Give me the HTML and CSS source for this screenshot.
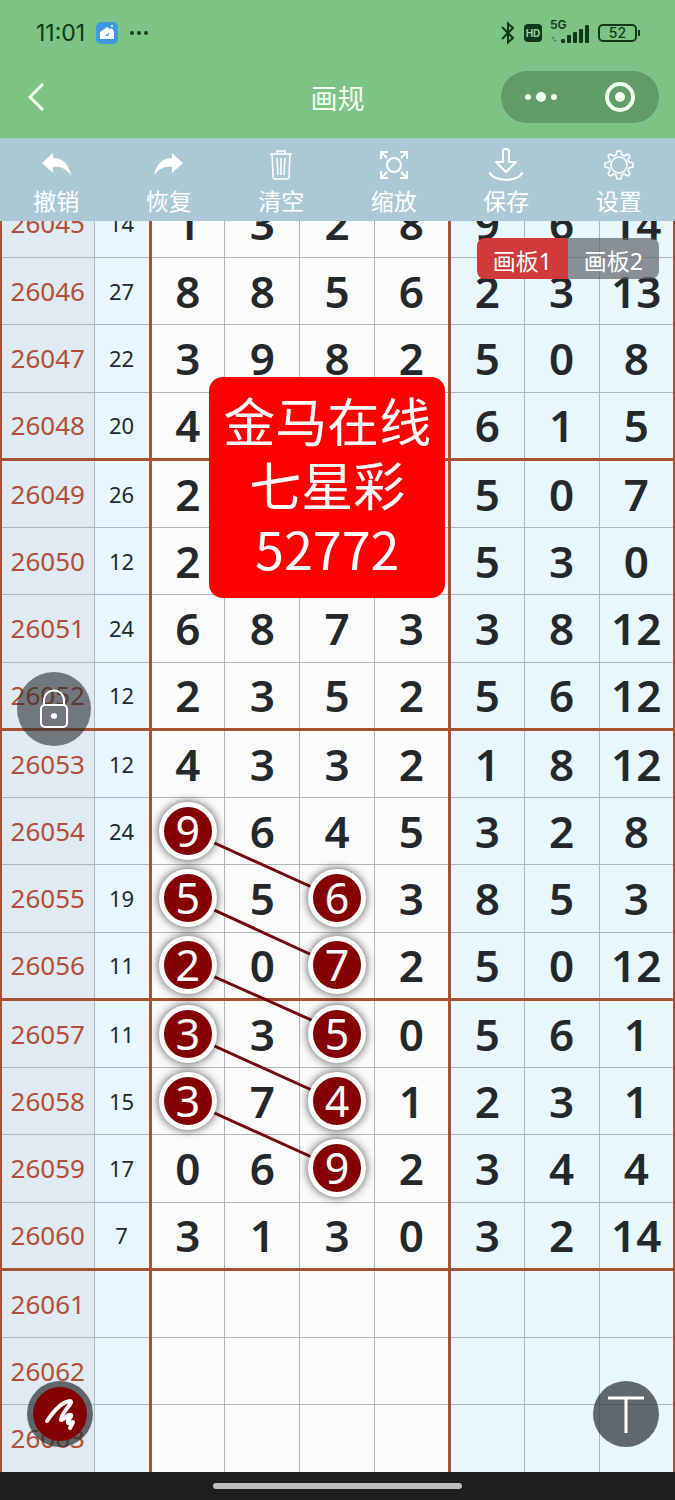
FILE: index.html
```html
<!DOCTYPE html>
<html lang="zh-CN">
<head>
    <meta charset="UTF-8">
    <meta name="viewport" content="width=device-width, initial-scale=1.0">
    <title>画规</title>
    <link rel="stylesheet" href="styles.css">
</head>
<body>
    <div class="screen">
        <header class="header">
            <div class="status">
                <div class="status_left">
                    <span class="time">11:01</span>
                    <svg class="app_icon" viewBox="0 0 24 24" width="24" height="24">
                        <rect x="1" y="1" width="22" height="22" rx="5" fill="#3f98e0"/>
                        <path d="M5 11L12 6L15 8L17 7L19 11V18H5Z" fill="#fff"/>
                        <circle cx="17" cy="5" r="1" fill="#fff"/>
                        <path d="M14 11V14Q12 16 10 14L13 13Z" fill="#3f98e0"/>
                    </svg>
                    <svg viewBox="0 0 20 6" width="20" height="6" fill="#12401c">
                        <circle cx="3" cy="3" r="2"/><circle cx="10" cy="3" r="2"/><circle cx="17" cy="3" r="2"/>
                    </svg>
                </div>
                <div class="status_right">
                    <svg viewBox="0 0 16 24" width="16" height="24" fill="none" stroke="#10381a" stroke-width="2">
                        <path d="M2 6L13 17L8 21.500V2.500L13 7L2 18"/>
                    </svg>
                    <span class="hd">HD</span>
                    <span class="signal">
                        <span class="net">5G</span>
                        <svg viewBox="0 0 40 22" width="40" height="22" fill="#10381a">
                            <path d="M1 17L4 14V17ZM4 18H7L4 20Z" opacity=".5"/>
                            <rect x="11" y="17" width="4" height="4" rx="1"/>
                            <rect x="17" y="13" width="4" height="8" rx="1"/>
                            <rect x="23" y="10" width="4" height="11" rx="1"/>
                            <rect x="29" y="7" width="4" height="14" rx="1"/>
                            <rect x="35" y="3" width="4" height="18" rx="1"/>
                        </svg>
                    </span>
                    <span class="battery">52</span>
                </div>
            </div>
            <div class="nav">
                <button class="back" aria-label="返回">
                    <svg viewBox="0 0 20 32" width="20" height="32" fill="none" stroke="#f2fff0" stroke-width="3">
                        <path d="M17 3L4 16L17 29"/>
                    </svg>
                </button>
                <h1>画规</h1>
                <div class="capsule">
                    <button aria-label="更多">
                        <svg viewBox="0 0 34 12" width="34" height="12" fill="#effff0">
                            <circle cx="4" cy="6" r="3"/><circle cx="17" cy="6" r="5"/><circle cx="30" cy="6" r="3"/>
                        </svg>
                    </button>
                    <button aria-label="关闭">
                        <svg viewBox="0 0 32 32" width="32" height="32">
                            <circle cx="16" cy="16" r="13" fill="none" stroke="#effff0" stroke-width="4"/>
                            <circle cx="16" cy="16" r="5" fill="#effff0"/>
                        </svg>
                    </button>
                </div>
            </div>
        </header>

        <div class="toolbar">
            <button class="tool">
                <svg viewBox="0 0 34 34" width="34" height="34" fill="#fff">
                    <path d="M3 15L14 5V10C24 10 30 17 32 27C26 20 21 18 14 19V25Z"/>
                </svg>
                撤销
            </button>
            <button class="tool">
                <svg viewBox="0 0 34 34" width="34" height="34" fill="#fff">
                    <path d="M31 15L20 5V10C10 10 4 17 2 27C8 20 13 18 20 19V25Z"/>
                </svg>
                恢复
            </button>
            <button class="tool">
                <svg viewBox="0 0 34 34" width="34" height="34" fill="none" stroke="#fff" stroke-width="1.500">
                    <path d="M6 6H28M13 6V3H21V6M8 6L9 28Q9 31 11 31H23Q25 31 25 28L26 6M13 10L14 27M17 10V27M21 10L20 27"/>
                </svg>
                清空
            </button>
            <button class="tool">
                <svg viewBox="0 0 34 34" width="34" height="34" fill="none" stroke="#fff" stroke-width="2">
                    <circle cx="17" cy="17" r="7"/>
                    <path d="M4 11V4H11M23 4H30V11M30 23V30H23M11 30H4V23M4 4L10 10M30 4L24 10M30 30L24 24M4 30L10 24"/>
                </svg>
                缩放
            </button>
            <button class="tool">
                <svg viewBox="0 0 34 34" width="34" height="34" fill="none" stroke="#fff" stroke-width="2" stroke-linejoin="round" stroke-linecap="round">
                    <path d="M14 3Q14 1 17 1Q20 1 20 3V14H27L17 24L7 14H14Z"/>
                    <path d="M1 25C5 34 29 34 33 25"/>
                </svg>
                保存
            </button>
            <button class="tool">
                <svg viewBox="0 0 34 34" width="34" height="34" fill="none" stroke="#fff" stroke-width="1.500" stroke-linejoin="round">
                    <circle cx="17" cy="17" r="8"/>
                    <path d="M14 7L15 3H19L20 7L22 8L26 6L28 8L26 12L27 14L31 15V19L27 20L26 22L28 26L26 28L22 26L20 27L19 31H15L14 27L12 26L8 28L6 26L8 22L7 20L3 19V15L7 14L8 12L6 8L8 6L12 8Z"/>
                </svg>
                设置
            </button>
        </div>

        <main class="board">
            <table class="chart">
                <colgroup>
                    <col class="col_issue">
                    <col class="col_sum">
                    <col span="7">
                </colgroup>
                <tbody>
                    <tr><th scope="row">26045</th><td>14</td><td>1</td><td>3</td><td>2</td><td>8</td><td>9</td><td>6</td><td>14</td></tr>
                    <tr><th scope="row">26046</th><td>27</td><td>8</td><td>8</td><td>5</td><td>6</td><td>2</td><td>3</td><td>13</td></tr>
                    <tr><th scope="row">26047</th><td>22</td><td>3</td><td>9</td><td>8</td><td>2</td><td>5</td><td>0</td><td>8</td></tr>
                    <tr><th scope="row">26048</th><td>20</td><td>4</td><td></td><td></td><td></td><td>6</td><td>1</td><td>5</td></tr>
                    <tr><th scope="row">26049</th><td>26</td><td>2</td><td></td><td></td><td></td><td>5</td><td>0</td><td>7</td></tr>
                    <tr><th scope="row">26050</th><td>12</td><td>2</td><td></td><td></td><td></td><td>5</td><td>3</td><td>0</td></tr>
                    <tr><th scope="row">26051</th><td>24</td><td>6</td><td>8</td><td>7</td><td>3</td><td>3</td><td>8</td><td>12</td></tr>
                    <tr><th scope="row">26052</th><td>12</td><td>2</td><td>3</td><td>5</td><td>2</td><td>5</td><td>6</td><td>12</td></tr>
                    <tr><th scope="row">26053</th><td>12</td><td>4</td><td>3</td><td>3</td><td>2</td><td>1</td><td>8</td><td>12</td></tr>
                    <tr>
                        <th scope="row">26054</th><td>24</td>
                        <td><svg class="trace" viewBox="0 0 100 100" preserveAspectRatio="none"><path d="M0 0L100 100"/></svg><span class="ball">9</span></td>
                        <td>6</td><td>4</td><td>5</td><td>3</td><td>2</td><td>8</td>
                    </tr>
                    <tr>
                        <th scope="row">26055</th><td>19</td>
                        <td><svg class="trace" viewBox="0 0 100 100" preserveAspectRatio="none"><path d="M0 0L100 100"/></svg><span class="ball">5</span></td>
                        <td>5</td><td><span class="ball">6</span></td><td>3</td><td>8</td><td>5</td><td>3</td>
                    </tr>
                    <tr>
                        <th scope="row">26056</th><td>11</td>
                        <td><svg class="trace" viewBox="0 0 100 100" preserveAspectRatio="none"><path d="M0 0L100 100"/></svg><span class="ball">2</span></td>
                        <td>0</td><td><span class="ball">7</span></td><td>2</td><td>5</td><td>0</td><td>12</td>
                    </tr>
                    <tr>
                        <th scope="row">26057</th><td>11</td>
                        <td><svg class="trace" viewBox="0 0 100 100" preserveAspectRatio="none"><path d="M0 0L100 100"/></svg><span class="ball">3</span></td>
                        <td>3</td><td><span class="ball">5</span></td><td>0</td><td>5</td><td>6</td><td>1</td>
                    </tr>
                    <tr>
                        <th scope="row">26058</th><td>15</td>
                        <td><svg class="trace" viewBox="0 0 100 100" preserveAspectRatio="none"><path d="M0 0L100 100"/></svg><span class="ball">3</span></td>
                        <td>7</td><td><span class="ball">4</span></td><td>1</td><td>2</td><td>3</td><td>1</td>
                    </tr>
                    <tr><th scope="row">26059</th><td>17</td><td>0</td><td>6</td><td><span class="ball">9</span></td><td>2</td><td>3</td><td>4</td><td>4</td></tr>
                    <tr><th scope="row">26060</th><td>7</td><td>3</td><td>1</td><td>3</td><td>0</td><td>3</td><td>2</td><td>14</td></tr>
                    <tr><th scope="row">26061</th><td></td><td></td><td></td><td></td><td></td><td></td><td></td><td></td></tr>
                    <tr><th scope="row">26062</th><td></td><td></td><td></td><td></td><td></td><td></td><td></td><td></td></tr>
                    <tr><th scope="row">26063</th><td></td><td></td><td></td><td></td><td></td><td></td><td></td><td></td></tr>
                </tbody>
            </table>

            <div class="tabs">
                <button class="tab active">画板1</button>
                <button class="tab">画板2</button>
            </div>
            <div class="note">金马在线<br>七星彩<br>52772</div>
            <button class="round lock" aria-label="锁定">
                <svg viewBox="0 0 32 42" width="32" height="42" fill="none" stroke="#fff" stroke-width="2">
                    <rect x="3" y="17" width="26" height="22" rx="4"/>
                    <path d="M6 17V13C6 -1 26 -1 26 13V17"/>
                    <circle cx="16" cy="28" r="3" fill="#fff" stroke="none"/>
                </svg>
            </button>
            <button class="round pen" aria-label="画笔">
                <svg viewBox="0 0 54 54" width="54" height="54" fill="none" stroke="#fff" stroke-width="4" stroke-linecap="round" stroke-linejoin="round">
                    <circle cx="27" cy="27" r="27" fill="#850002" stroke="none"/>
                    <path d="M14 34C20 25 29 15 37 14C42 15 28 25 28 33C31 33 35 26 38 28C40 30 33 33 35 36C37 37 38 35 40 35L37 41"/>
                </svg>
            </button>
            <button class="round text" aria-label="文字">
                <svg viewBox="0 0 40 40" width="40" height="40" fill="none" stroke="#fff" stroke-width="3">
                    <path d="M2 4H38M20 4V39"/>
                </svg>
            </button>
        </main>

        <footer class="home"><span class="home_bar"></span></footer>
    </div>
</body>
</html>
```
FILE: styles.css
```css
*{
    margin: 0;
    padding: 0;
    box-sizing: border-box;
}
body {
    font-family: "Noto Sans", "Noto Sans CJK SC", sans-serif;
}
button {
    border: none;
    background: none;
    font: inherit;
    color: #fff;
    cursor: pointer;
}
svg {
    display: block;
}
.screen {
    display: flex;
    flex-direction: column;
    height: 100vh;
    overflow: hidden;
}
.header {
    background-color: #7cc386;
    padding-bottom: 10px;
}
.status {
    display: flex;
    justify-content: space-between;
    align-items: center;
    height: 66px;
    padding: 0 38px 0 36px;
    color: #10381a;
}
.status_left {
    display: flex;
    align-items: center;
    gap: 10px;
}
.time {
    font-family: Inter, sans-serif;
    font-size: 23px;
}
.status_right {
    display: flex;
    align-items: center;
    gap: 8px;
}
.hd {
    background-color: #10381a;
    color: #9bd4a3;
    font: 700 10px/18px Inter, sans-serif;
    width: 18px;
    text-align: center;
    border-radius: 4px;
}
.signal {
    position: relative;
}
.net {
    position: absolute;
    left: 0;
    top: -4px;
    font: 600 12px/14px Inter, sans-serif;
}
.battery {
    position: relative;
    width: 39px;
    border: 2px solid #10381a;
    border-radius: 5px;
    font: 500 14px/14px Inter, sans-serif;
    text-align: center;
}
.battery::after {
    content: "";
    position: absolute;
    right: -5px;
    top: 4px;
    width: 2px;
    height: 6px;
    background-color: #10381a;
}
.nav {
    display: grid;
    grid-template-columns: 1fr auto 1fr;
    align-items: center;
    height: 62px;
    padding: 0 16px;
}
.back {
    justify-self: start;
    padding-left: 10px;
}
h1 {
    font-size: 27px;
    font-weight: 400;
    color: #f2fff0;
}
.capsule {
    justify-self: end;
    display: flex;
    justify-content: space-around;
    align-items: center;
    width: 158px;
    height: 52px;
    border-radius: 26px;
    background-color: #609c69;
}
.toolbar {
    display: grid;
    grid-template-columns: repeat(6, 1fr);
    height: 83px;
    flex: none;
    background-color: #acc8d4;
}
.tool {
    display: flex;
    flex-direction: column;
    align-items: center;
    gap: 3px;
    padding-top: 10px;
    font-size: 23px;
    line-height: 32px;
}
.board {
    position: relative;
    display: flex;
    flex-direction: column;
    justify-content: flex-end;
    flex: 1;
    min-height: 0;
    overflow: hidden;
}
.chart {
    flex: none;
    width: 100%;
    table-layout: fixed;
    border-collapse: collapse;
    border: 2px solid #a85234;
    border-width: 0 2px;
}
.col_issue {
    width: 93px;
}
.col_sum {
    width: 56px;
}
.chart tr {
    height: 68px;
}
.chart tr:nth-child(even) {
    height: 67px;
}
.chart tr:nth-child(4n) {
    border-bottom: 3px solid #a85234;
}
.chart th,
.chart td {
    position: relative;
    border: 1px solid #b0b5b8;
    border-bottom-width: 0;
    text-align: center;
    color: #25282a;
    background-color: #fbfbfb;
    font-size: 44px;
    font-weight: 600;
    line-height: 60px;
}
.chart th:first-child {
    border-left: 2px solid #a85234;
    background-color: #dfeaf2;
    color: #b04e38;
    font-size: 26px;
    font-weight: 400;
}
.chart td:nth-child(2) {
    background-color: #e7f6ff;
    border-right: 3px solid #a85234;
    font-size: 22px;
    font-weight: 400;
}
.chart td:nth-child(6) {
    border-right: 3px solid #a85234;
}
.chart td:nth-child(n+7) {
    background-color: #e8f6fe;
}
.ball {
    position: relative;
    z-index: 2;
    display: block;
    width: 58px;
    height: 58px;
    margin: 0 auto;
    border: 5px solid #fff;
    border-radius: 50%;
    background-color: #850002;
    box-shadow: 0 0 10px rgba(0, 0, 0, 0.7);
    color: #fff;
    font-size: 43px;
    font-weight: 400;
    line-height: 48px;
}
/* runs from the middle of this cell to two columns right, one row down */
.trace {
    position: absolute;
    z-index: 1;
    left: 50%;
    top: 50%;
    width: 200%;
    height: 100%;
    overflow: visible;
}
.trace path {
    stroke: #74070f;
    stroke-width: 3px;
    vector-effect: non-scaling-stroke;
}
.tabs {
    position: absolute;
    z-index: 3;
    top: 17px;
    right: 16px;
    display: flex;
    border-radius: 8px;
    overflow: hidden;
}
.tab {
    padding: 7px 16px 1px;
    font-size: 23px;
    line-height: 33px;
    background-color: rgba(95, 100, 104, 0.7);
}
.tab.active {
    background-color: #cf3a3c;
}
.note {
    position: absolute;
    z-index: 3;
    top: 156px;
    left: 31%;
    padding: 11px 14px 18px;
    border-radius: 14px;
    background-color: #fe0000;
    color: #fff;
    font-family: "Noto Sans CJK SC", sans-serif;
    font-size: 52px;
    line-height: 64px;
    text-align: center;
}
.round {
    position: absolute;
    z-index: 3;
    display: flex;
    justify-content: center;
    align-items: center;
    width: 66px;
    height: 66px;
    border-radius: 50%;
    background-color: rgba(40, 44, 47, 0.7);
}
.lock {
    left: 17px;
    top: 451px;
    width: 74px;
    height: 74px;
    background-color: rgba(40, 44, 47, 0.6);
}
.pen {
    left: 27px;
    bottom: 25px;
}
.text {
    right: 16px;
    bottom: 25px;
}
.home {
    display: flex;
    justify-content: center;
    align-items: center;
    height: 28px;
    flex: none;
    background-color: #1e1e1e;
}
.home_bar {
    width: 37%;
    height: 6px;
    border-radius: 3px;
    background-color: #bdbdbd;
}
```
